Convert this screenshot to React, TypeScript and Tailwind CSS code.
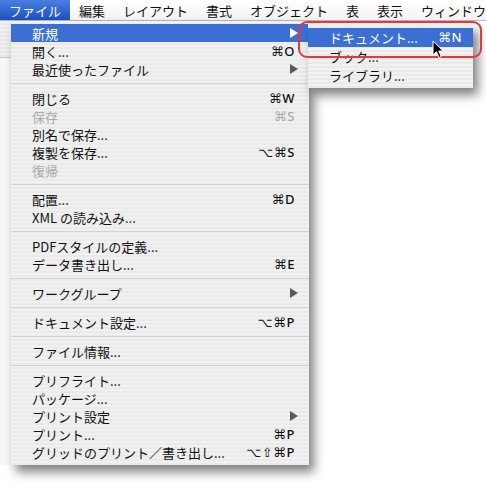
import React from "react";

type Item = { label: string; sc?: string; sub?: boolean; dis?: boolean; hl?: boolean };

const groups: Item[][] = [
  [
    { label: "新規", sub: true, hl: true },
    { label: "開く...", sc: "⌘O" },
    { label: "最近使ったファイル", sub: true },
  ],
  [
    { label: "閉じる", sc: "⌘W" },
    { label: "保存", sc: "⌘S", dis: true },
    { label: "別名で保存..." },
    { label: "複製を保存...", sc: "⌥⌘S" },
    { label: "復帰", dis: true },
  ],
  [{ label: "配置...", sc: "⌘D" }, { label: "XML の読み込み..." }],
  [{ label: "PDFスタイルの定義..." }, { label: "データ書き出し...", sc: "⌘E" }],
  [{ label: "ワークグループ", sub: true }],
  [{ label: "ドキュメント設定...", sc: "⌥⌘P" }],
  [{ label: "ファイル情報..." }],
  [
    { label: "プリフライト..." },
    { label: "パッケージ..." },
    { label: "プリント設定", sub: true },
    { label: "プリント...", sc: "⌘P" },
    { label: "グリッドのプリント／書き出し...", sc: "⌥⇧⌘P" },
  ],
];

const menuBar = ["編集", "レイアウト", "書式", "オブジェクト", "表", "表示", "ウィンドウ"];

const stripes =
  "bg-[repeating-linear-gradient(180deg,#f1f1f1_0px,#f1f1f1_2px,#eaeaea_2px,#eaeaea_4px)]";

function Tri({ white }: { white?: boolean }) {
  return (
    <svg width="8" height="10" viewBox="0 0 8 10" className="shrink-0">
      <path d="M0 0 L8 5 L0 10 Z" fill={white ? "#ffffff" : "#5a5a5a"} />
    </svg>
  );
}

function Row({ it }: { it: Item }) {
  const color = it.hl ? "text-white" : it.dis ? "text-[#a9a9a9]" : "text-[#111]";
  return (
    <div
      className={`h-[18px] flex items-center justify-between pl-[21px] ${
        it.sub ? "pr-[11px]" : "pr-[14px]"
      } ${it.hl ? "bg-[#3b6fd4]" : ""} ${color}`}
    >
      <span className="leading-none whitespace-nowrap">{it.label}</span>
      {it.sc && (
        <span className="leading-none whitespace-nowrap tracking-[0.5px] font-['Noto_Sans','DejaVu_Sans',sans-serif] text-[13px] font-medium">
          {it.sc}
        </span>
      )}
      {it.sub && <Tri white={it.hl} />}
    </div>
  );
}

export default function App() {
  return (
    <div className="w-[486px] h-[485px] bg-white overflow-hidden relative font-['Noto_Sans_CJK_JP','Noto_Sans',sans-serif] text-[13px]">
      {/* menu bar */}
      <div className="h-[21px] flex items-stretch bg-gradient-to-b from-[#ffffff] to-[#f3f3f3] border-b border-[#b9b9b9] text-[#111] whitespace-nowrap">
        <div className="w-[11px] overflow-hidden flex items-center">
          <span className="leading-none -ml-[1px] text-[#1a1a2a]">n</span>
        </div>
        <div className="px-[9px] flex items-center text-white bg-gradient-to-b from-[#4a7fe0] to-[#1d50c4]">
          <span className="leading-none">ファイル</span>
        </div>
        {menuBar.map((m) => (
          <div key={m} className="px-[9px] flex items-center">
            <span className="leading-none">{m}</span>
          </div>
        ))}
      </div>

      {/* body */}
      <div className="flex">
        <div className="w-[11px] flex flex-col">
          <div className={`h-[37px] ${stripes} border-b border-[#c8c8c8]`} />
          <div className="flex-1 bg-[#f7f7f7]" />
        </div>
        <div
          className={`w-[298px] pt-[3px] pb-[4px] ${stripes} shadow-[5px_7px_10px_rgba(0,0,0,0.5)] relative z-10`}
        >
          {groups.map((g, gi) => (
            <div key={gi}>
              {gi > 0 && (
                <div className="h-[11px] flex items-center">
                  <div className="h-px w-full bg-[#d3d3d3]" />
                </div>
              )}
              {g.map((it) => (
                <Row key={it.label} it={it} />
              ))}
            </div>
          ))}
        </div>
      </div>

      {/* submenu */}
      <div
        className={`absolute left-[308px] top-[24px] w-[165px] pt-[4px] pb-[3px] ${stripes} shadow-[5px_7px_10px_rgba(0,0,0,0.5)] z-20 text-[#111]`}
      >
        <div className="h-[19px] flex items-center justify-between pl-[21px] pr-[11px] bg-[#3b6fd4] text-white">
          <span className="leading-none whitespace-nowrap">ドキュメント...</span>
          <span className="leading-none font-['Noto_Sans','DejaVu_Sans',sans-serif] tracking-[0.5px] font-medium">⌘N</span>
        </div>
        <div className="h-[19px] flex items-center pl-[21px]">
          <span className="leading-none">ブック...</span>
        </div>
        <div className="h-[19px] flex items-center pl-[21px]">
          <span className="leading-none">ライブラリ...</span>
        </div>
      </div>

      {/* red highlight box */}
      <div className="absolute left-[298px] top-[21px] w-[184px] h-[37px] border-2 border-[#e5373c] rounded-[9px] z-30" />

      {/* cursor */}
      <svg
        className="absolute left-[432px] top-[40px] z-40"
        width="13"
        height="19"
        viewBox="0 0 13 19"
      >
        <path
          d="M1 1 L1 15 L4.5 11.8 L7 17.5 L9.2 16.6 L6.8 11 L11.2 11 Z"
          fill="#000"
          stroke="#fff"
          strokeWidth="1"
          strokeLinejoin="round"
        />
      </svg>
    </div>
  );
}
